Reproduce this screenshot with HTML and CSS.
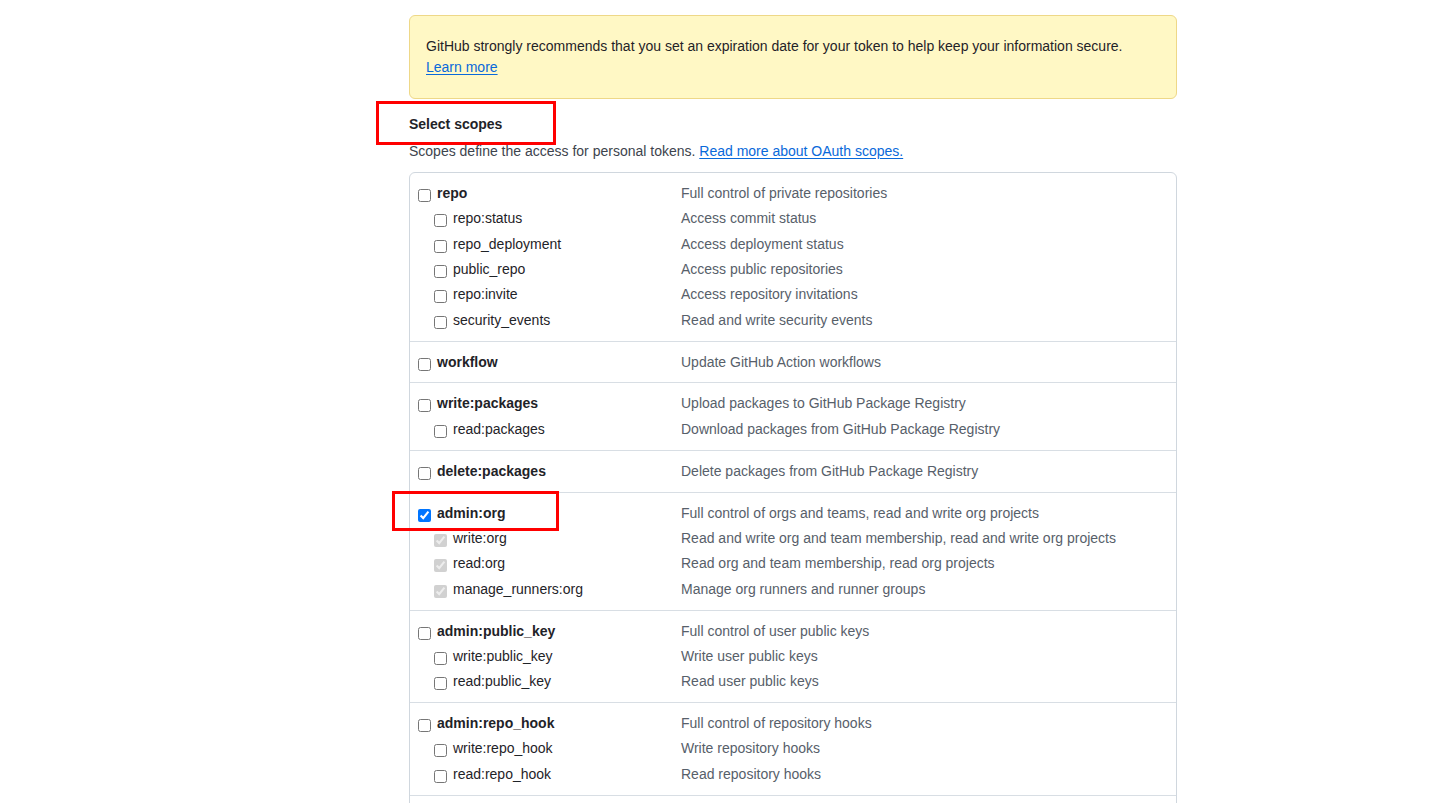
FILE: index.html
```html
<!DOCTYPE html>
<html lang="en">
<head>
<meta charset="utf-8">
<title>Select scopes</title>
<link rel="stylesheet" href="styles.css">
</head>
<body>
<div class="page">
  <div class="flash">
    GitHub strongly recommends that you set an expiration date for your token to help keep your information secure.<br>
    <a href="#" class="link">Learn more</a>
  </div>

  <h3 class="heading">Select scopes</h3>
  <p class="note">Scopes define the access for personal tokens. <a href="#" class="link">Read more about OAuth scopes.</a></p>

  <div class="scopes">
    <div class="group">
      <div class="row top"><label class="name"><input type="checkbox" class="cb">repo</label><span class="desc">Full control of private repositories</span></div>
      <div class="row child"><label class="name"><input type="checkbox" class="cb">repo:status</label><span class="desc">Access commit status</span></div>
      <div class="row child"><label class="name"><input type="checkbox" class="cb">repo_deployment</label><span class="desc">Access deployment status</span></div>
      <div class="row child"><label class="name"><input type="checkbox" class="cb">public_repo</label><span class="desc">Access public repositories</span></div>
      <div class="row child"><label class="name"><input type="checkbox" class="cb">repo:invite</label><span class="desc">Access repository invitations</span></div>
      <div class="row child"><label class="name"><input type="checkbox" class="cb">security_events</label><span class="desc">Read and write security events</span></div>
    </div>
    <div class="group">
      <div class="row top"><label class="name"><input type="checkbox" class="cb">workflow</label><span class="desc">Update GitHub Action workflows</span></div>
    </div>
    <div class="group">
      <div class="row top"><label class="name"><input type="checkbox" class="cb">write:packages</label><span class="desc">Upload packages to GitHub Package Registry</span></div>
      <div class="row child"><label class="name"><input type="checkbox" class="cb">read:packages</label><span class="desc">Download packages from GitHub Package Registry</span></div>
    </div>
    <div class="group">
      <div class="row top"><label class="name"><input type="checkbox" class="cb">delete:packages</label><span class="desc">Delete packages from GitHub Package Registry</span></div>
    </div>
    <div class="group">
      <div class="row top"><label class="name"><input type="checkbox" class="cb" checked>admin:org</label><span class="desc">Full control of orgs and teams, read and write org projects</span></div>
      <div class="row child"><label class="name"><input type="checkbox" class="cb" checked disabled>write:org</label><span class="desc">Read and write org and team membership, read and write org projects</span></div>
      <div class="row child"><label class="name"><input type="checkbox" class="cb" checked disabled>read:org</label><span class="desc">Read org and team membership, read org projects</span></div>
      <div class="row child"><label class="name"><input type="checkbox" class="cb" checked disabled>manage_runners:org</label><span class="desc">Manage org runners and runner groups</span></div>
    </div>
    <div class="group">
      <div class="row top"><label class="name"><input type="checkbox" class="cb">admin:public_key</label><span class="desc">Full control of user public keys</span></div>
      <div class="row child"><label class="name"><input type="checkbox" class="cb">write:public_key</label><span class="desc">Write user public keys</span></div>
      <div class="row child"><label class="name"><input type="checkbox" class="cb">read:public_key</label><span class="desc">Read user public keys</span></div>
    </div>
    <div class="group">
      <div class="row top"><label class="name"><input type="checkbox" class="cb">admin:repo_hook</label><span class="desc">Full control of repository hooks</span></div>
      <div class="row child"><label class="name"><input type="checkbox" class="cb">write:repo_hook</label><span class="desc">Write repository hooks</span></div>
      <div class="row child"><label class="name"><input type="checkbox" class="cb">read:repo_hook</label><span class="desc">Read repository hooks</span></div>
    </div>
    <div class="group group-more"></div>
  </div>
</div>

<div class="annot annot-heading"></div>
<div class="annot annot-admin"></div>
</body>
</html>
```

FILE: styles.css
```css
html, body {
  margin: 0;
  padding: 0;
  background: #ffffff;
  overflow: hidden;
}

body {
  font-family: "Liberation Sans", Arial, sans-serif;
  font-size: 14px;
  line-height: 21px;
  color: #1f2328;
  position: relative;
  height: 803px;
}

.page {
  width: 768px;
  margin-left: 409px;
  padding-top: 15px;
}

.flash {
  background: #fff8c5;
  border: 1px solid #eed888;
  border-radius: 6px;
  padding: 20px 16px;
  color: #1f2328;
}

.link {
  color: #0969da;
  text-decoration: underline;
  text-underline-offset: 2px;
}

.heading {
  margin: 15px 0 0;
  font-size: 14px;
  font-weight: bold;
  line-height: 21px;
}

.note {
  margin: 6px 0 0;
  color: #3d444d;
}

.scopes {
  margin-top: 10px;
  border: 1px solid #d0d7de;
  border-radius: 6px;
}

.group {
  padding: 7.8px 0;
  border-top: 1px solid #d8dee4;
}

.group:first-child {
  border-top: none;
}

.group-more {
  height: 26px;
}

.row {
  display: flex;
  align-items: center;
  height: 25.33px;
}

.name {
  width: 271px;
  flex: none;
  display: flex;
  align-items: center;
  box-sizing: border-box;
  padding-left: 8px;
}

.row.child .name {
  padding-left: 24px;
}

.row.top .name {
  font-weight: bold;
}

.cb {
  width: 13px;
  height: 13px;
  margin: 4px 6px 0 0;
  flex: none;
}

.desc {
  color: #57606a;
}

.annot {
  position: absolute;
  border: 3px solid #ff0000;
  box-sizing: border-box;
  pointer-events: none;
}

.annot-heading {
  left: 376px;
  top: 101px;
  width: 180px;
  height: 44px;
}

.annot-admin {
  left: 392px;
  top: 491px;
  width: 167px;
  height: 40px;
}
```
